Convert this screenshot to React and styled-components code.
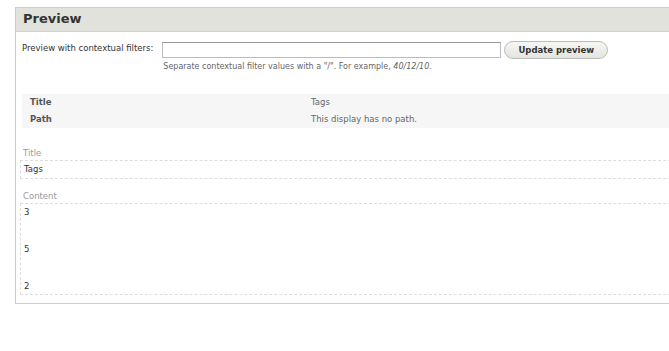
import React from "react";
import styled, { createGlobalStyle } from "styled-components";

const Global = createGlobalStyle`
  html, body { margin: 0; padding: 0; overflow: hidden; background: #fff; }
  body { font-family: "DejaVu Sans", Verdana, sans-serif; color: #333; }
`;

const Page = styled.div`
  padding: 7px 0 0 15px;
`;

const Panel = styled.section`
  width: 700px;
  border: 1px solid #ccc;
  background: #fff;
`;

const PanelHeader = styled.h2`
  margin: 0;
  height: 23px;
  line-height: 22px;
  padding: 0 0 0 7px;
  background: #e1e2dc;
  border-bottom: 1px solid #d0d0cc;
  font-size: 13px;
  font-weight: bold;
  color: #333;
`;

const PanelBody = styled.div`
  padding: 9px 0 8px 4px;
`;

const FilterRow = styled.div`
  display: flex;
  align-items: flex-start;
  padding-left: 2px;
`;

const FilterLabel = styled.label`
  font-size: 8.5px;
  line-height: 12px;
  padding-top: 1px;
  margin-right: 9px;
  white-space: nowrap;
`;

const FilterField = styled.div`
  display: flex;
  flex-direction: column;
`;

const FieldLine = styled.div`
  display: flex;
  align-items: center;
  gap: 3px;
`;

const TextInput = styled.input`
  box-sizing: border-box;
  width: 339px;
  height: 16px;
  border: 1px solid #bbb;
  border-top-color: #999;
  background: #fff;
  padding: 0 3px;
  margin: 0;
`;

const Button = styled.button`
  box-sizing: border-box;
  height: 18px;
  width: 104px;
  padding: 0;
  border: 1px solid #bbb;
  border-radius: 9px;
  background: linear-gradient(#f6f6f4, #e4e4e0);
  font-family: "DejaVu Sans", Verdana, sans-serif;
  font-size: 8.5px;
  font-weight: bold;
  color: #333;
`;

const Description = styled.div`
  font-size: 8px;
  color: #666;
  margin-top: 3px;
  padding-left: 1px;
  em { font-style: italic; }
`;

const InfoTable = styled.div`
  display: grid;
  grid-template-columns: 289px 1fr;
  margin: 23px 0 0 2px;
  padding: 0;
  background: #f6f6f6;
  font-size: 8.5px;
  line-height: 17px;
`;

const InfoKey = styled.div`
  font-weight: bold;
  color: #555;
  padding-left: 8px;
`;

const InfoValue = styled.div`
  color: #666;
`;

const FieldLabel = styled.div`
  font-size: 8.5px;
  color: #999;
  padding-left: 3px;
  margin-top: ${p => p.$first ? "19px" : "11px"};
  line-height: 13px;
`;

const FieldBox = styled.div`
  border: 1px dashed #ddd;
  border-right: none;
  font-size: 8.5px;
  color: #333;
  padding: 2px 0 ${p => p.$tall ? "2px" : "3px"} 3px;
  line-height: 12px;
`;

const Para = styled.p`
  margin: 0;
  & + & { margin-top: 25px; }
`;

export default function App() {
  return (
    <>
      <Global />
      <Page>
        <Panel>
          <PanelHeader>Preview</PanelHeader>
          <PanelBody>
            <FilterRow>
              <FilterLabel>Preview with contextual filters:</FilterLabel>
              <FilterField>
                <FieldLine>
                  <TextInput type="text" />
                  <Button>Update preview</Button>
                </FieldLine>
                <Description>
                  Separate contextual filter values with a "/". For example, <em>40/12/10</em>.
                </Description>
              </FilterField>
            </FilterRow>
            <InfoTable>
              <InfoKey>Title</InfoKey>
              <InfoValue>Tags</InfoValue>
              <InfoKey>Path</InfoKey>
              <InfoValue>This display has no path.</InfoValue>
            </InfoTable>
            <FieldLabel $first>Title</FieldLabel>
            <FieldBox>Tags</FieldBox>
            <FieldLabel>Content</FieldLabel>
            <FieldBox $tall>
              <Para>3</Para>
              <Para>5</Para>
              <Para>2</Para>
            </FieldBox>
          </PanelBody>
        </Panel>
      </Page>
    </>
  );
}
